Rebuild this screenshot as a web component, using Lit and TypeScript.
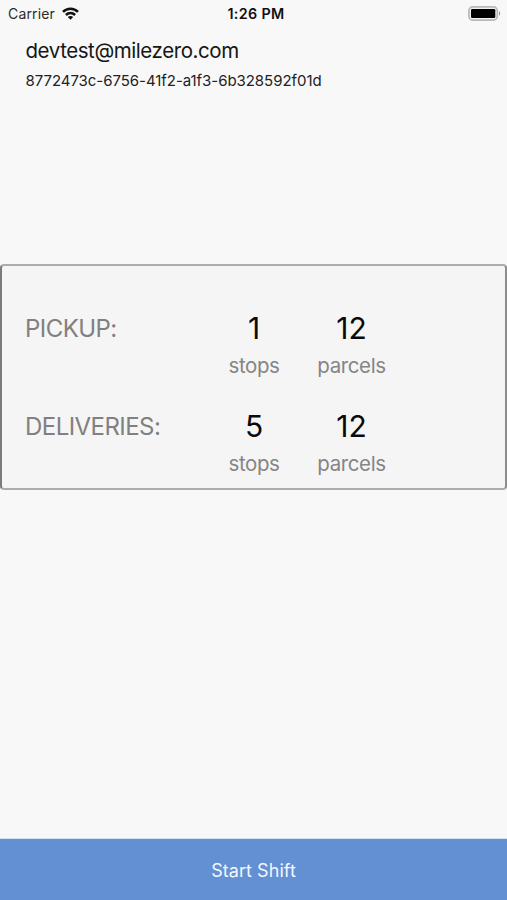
import { LitElement, html, css } from "lit";
import { customElement, property } from "lit/decorators.js";

@customElement("status-bar")
class StatusBar extends LitElement {
  static styles = css`
    :host {
      display: grid;
      grid-template-columns: 1fr auto 1fr;
      align-items: center;
      height: 28px;
      padding: 0 6px 0 8px;
      box-sizing: border-box;
      color: #111;
      font-size: 14px;
      line-height: 28px;
    }
    .carrier { display: flex; align-items: center; gap: 7px; color: #2a2a2a; letter-spacing: 0.15px; }
    .time { font-weight: 600; font-size: 14.3px; letter-spacing: 0.35px; padding-left: 3px; }
    .battery { display: flex; justify-content: flex-end; }
    svg { display: block; }
    .cell { margin-top: -2px; }
    .wifi { margin-top: -2px; }
  `;
  render() {
    return html`
      <div class="carrier">
        <span>Carrier</span>
        <svg class="wifi" width="17" height="13" viewBox="0 0 17 13" fill="none" stroke="#111" stroke-width="2.5">
          <path d="M1 4.9C5.2 .6 11.8 .6 16 4.9" />
          <path d="M3.9 8C6.5 5.4 10.5 5.4 13.1 8" />
          <path d="M8.5 12.7L5.8 10C7.3 8.5 9.7 8.5 11.2 10Z" fill="#111" stroke="none" />
        </svg>
      </div>
      <span class="time">1:26 PM</span>
      <div class="battery">
        <svg class="cell" width="33" height="15" viewBox="0 0 33 15">
          <rect x=".9" y=".9" width="28.4" height="13.2" rx="3.8" fill="#f0f0f0" stroke="#b9b9b9" stroke-width="1.7" />
          <rect x="3" y="3" width="24.3" height="9" rx="1.2" fill="#000" />
          <path d="M31 5.3C32.6 5.9 32.6 9.1 31 9.7Z" fill="#999" />
        </svg>
      </div>
    `;
  }
}

@customElement("count-cell")
class CountCell extends LitElement {
  @property() value = "";
  @property() unit = "";
  static styles = css`
    :host { display: flex; flex-direction: column; align-items: center; }
    .value { font-size: 30px; line-height: 38px; color: #0a0a0a; }
    .unit { font-size: 20.5px; line-height: 38px; color: #858585; letter-spacing: -0.4px; }
  `;
  render() {
    return html`<span class="value">${this.value}</span><span class="unit">${this.unit}</span>`;
  }
}

@customElement("app-root")
class AppRoot extends LitElement {
  static styles = css`
    :host {
      display: flex;
      flex-direction: column;
      height: 900px;
      background: #f8f8f8;
      font-family: Inter, "Liberation Sans", sans-serif;
    }
    .account { height: 236px; padding-left: 25.5px; box-sizing: border-box; padding-top: 8px; }
    .email { font-size: 20.5px; line-height: 30px; color: #161616; letter-spacing: -0.43px; }
    .id { font-size: 15px; line-height: 30px; color: #222; letter-spacing: -0.05px; }
    .summary {
      height: 226px;
      box-sizing: border-box;
      border: 2px solid #acacac;
      border-left-color: #7b7b7b;
      border-right-color: #8c8c8c;
      border-radius: 4px;
      background: #f5f5f5;
      padding: 43px 0 0 23px;
    }
    .row { display: grid; grid-template-columns: 180px 98px 97px; height: 98px; }
    .label { font-size: 24px; line-height: 39px; color: #808080; white-space: nowrap; letter-spacing: -0.55px; }
    .start {
      margin-top: auto;
      height: 62px;
      border: 0;
      border-top: 1px solid #d5e1f2;
      padding: 2px 0 0;
      background: #638fd3;
      color: #f3f7ff;
      font: 18px Inter, sans-serif;
      letter-spacing: 0.05px;
    }
  `;
  render() {
    const rows = [
      { label: "PICKUP:", stops: "1", parcels: "12" },
      { label: "DELIVERIES:", stops: "5", parcels: "12" },
    ];
    return html`
      <status-bar></status-bar>
      <section class="account">
        <div><span class="email">devtest@milezero.com</span></div>
        <div><span class="id">8772473c-6756-41f2-a1f3-6b328592f01d</span></div>
      </section>
      <section class="summary">
        ${rows.map(
          (r) => html`<div class="row">
            <span class="label">${r.label}</span>
            <count-cell value=${r.stops} unit="stops"></count-cell>
            <count-cell value=${r.parcels} unit="parcels"></count-cell>
          </div>`
        )}
      </section>
      <button class="start">Start Shift</button>
    `;
  }
}
